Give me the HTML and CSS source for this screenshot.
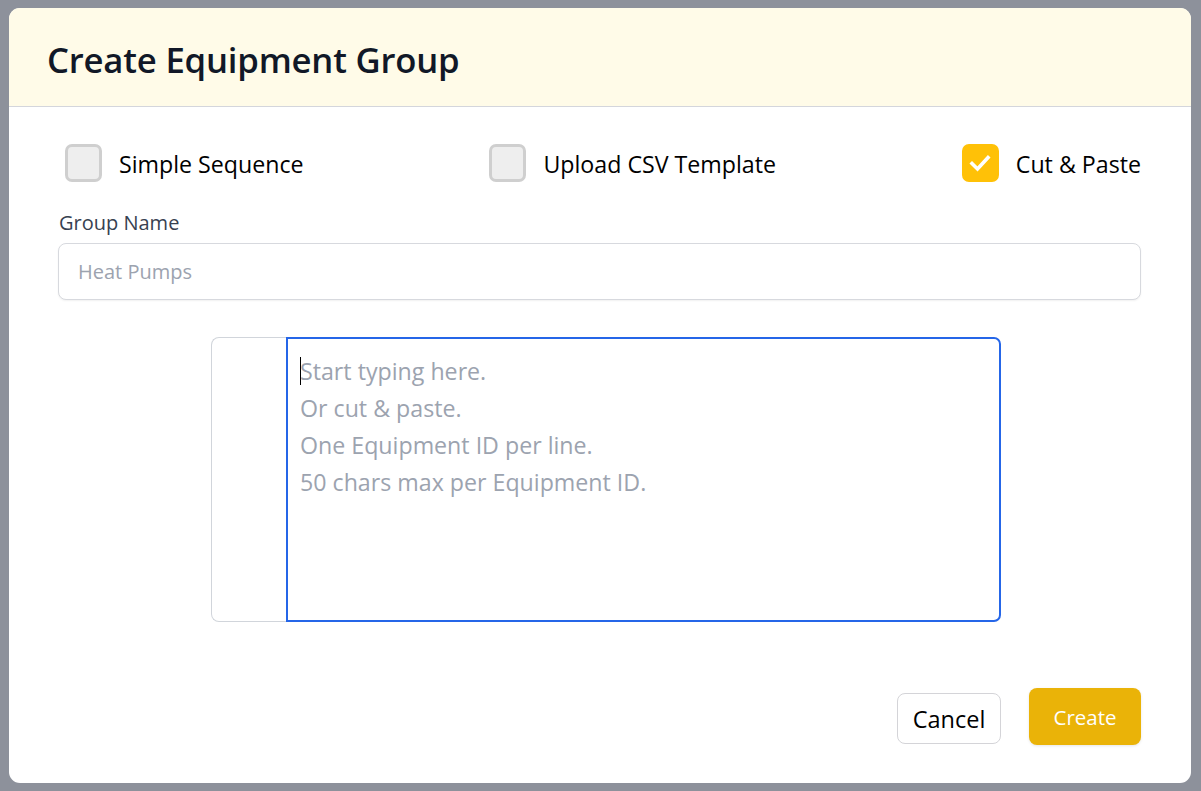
FILE: index.html
```html
<!DOCTYPE html>
<html lang="en">
<head>
<meta charset="utf-8">
<title>Create Equipment Group</title>
<link rel="stylesheet" href="styles.css">
</head>
<body>
<div class="overlay">
  <div class="modal">
    <div class="modal-header">
      <h1 class="modal-title">Create Equipment Group</h1>
    </div>
    <div class="modal-body">
      <div class="mode-row">
        <label class="mode">
          <span class="box"></span>
          <span class="mode-label">Simple Sequence</span>
        </label>
        <label class="mode">
          <span class="box"></span>
          <span class="mode-label">Upload CSV Template</span>
        </label>
        <label class="mode">
          <span class="box checked">
            <svg viewBox="0 0 38 38" width="38" height="38"><path d="M11 19.5 L16.5 25 L27 13.5" fill="none" stroke="#fff" stroke-width="3.6" stroke-linecap="square" stroke-linejoin="miter"/></svg>
          </span>
          <span class="mode-label">Cut &amp; Paste</span>
        </label>
      </div>
      <div class="field">
        <div class="field-label">Group Name</div>
        <input class="text-input" type="text" placeholder="Heat Pumps">
      </div>
      <div class="editor">
        <div class="gutter"></div>
        <div class="editor-main">
          <textarea class="editor-text" placeholder="Start typing here.&#10;Or cut &amp; paste.&#10;One Equipment ID per line.&#10;50 chars max per Equipment ID."></textarea>
          <span class="caret"></span>
        </div>
      </div>
      <div class="actions">
        <button class="btn btn-cancel" type="button">Cancel</button>
        <button class="btn btn-create" type="button">Create</button>
      </div>
    </div>
  </div>
</div>
</body>
</html>
```

FILE: styles.css
```css
* { box-sizing: border-box; }
html, body { margin: 0; padding: 0; }
body {
  font-family: "Open Sans", "Noto Sans", "Liberation Sans", sans-serif;
  width: 1201px;
  height: 791px;
  overflow: hidden;
}
.overlay {
  width: 1201px;
  height: 791px;
  background: #8d919b;
  padding: 8px 10px 8px 9px;
}
.modal {
  width: 1182px;
  height: 775px;
  background: #ffffff;
  border-radius: 11px;
  overflow: hidden;
  display: flex;
  flex-direction: column;
}
.modal-header {
  height: 99px;
  background: #fffbe8;
  border-bottom: 1px solid #d4d6dc;
  display: flex;
  align-items: center;
  padding: 4px 0 0 38px;
  flex-shrink: 0;
}
.modal-title {
  margin: 0;
  font-size: 34.7px;
  font-weight: 600;
  color: #111827;
  letter-spacing: -0.2px;
}
.modal-body {
  padding: 37px 50px 0 49px;
  display: flex;
  flex-direction: column;
  flex: 1;
}
.mode-row {
  display: flex;
  justify-content: space-between;
  align-items: center;
  padding: 0 0 0 7px;
  height: 38px;
}
.mode {
  display: flex;
  align-items: center;
  gap: 17px;
}
.box {
  width: 37px;
  height: 38px;
  border: 3px solid #cfcfcf;
  background: #eeeeee;
  border-radius: 7px;
  display: flex;
  align-items: center;
  justify-content: center;
}
.box.checked {
  background: #ffc107;
  border-color: #ffc107;
}
.box.checked svg { flex-shrink: 0; }
.mode-label {
  font-size: 23.2px;
  color: #000000;
  line-height: 32px;
  padding-top: 1px;
}
.field {
  margin-top: 27px;
}
.field-label {
  font-size: 20px;
  color: #374151;
  line-height: 27px;
  margin-left: 1px;
}
.text-input {
  display: block;
  margin-top: 7px;
  width: 100%;
  height: 57px;
  border: 1px solid #d7d9de;
  border-radius: 8px;
  padding: 0 19px;
  font-family: inherit;
  font-size: 20px;
  color: #111827;
  box-shadow: 0 1px 2px rgba(0,0,0,0.06);
  outline: none;
}
.text-input::placeholder { color: #9ca3af; }
.editor {
  margin: 37px 0 0 153px;
  width: 790px;
  height: 285px;
  display: flex;
}
.gutter {
  width: 75px;
  border: 1px solid #d1d5db;
  border-right: none;
  border-radius: 8px 0 0 8px;
  background: #ffffff;
}
.editor-main {
  flex: 1;
  position: relative;
}
.editor-text {
  display: block;
  width: 100%;
  height: 100%;
  border: 2px solid #2566e8;
  border-radius: 0 7px 7px 0;
  padding: 14px 12px;
  font-family: inherit;
  font-size: 23.2px;
  line-height: 37px;
  resize: none;
  outline: none;
  color: #111827;
}
.editor-text::placeholder { color: #9ca3af; }
.caret {
  position: absolute;
  left: 14px;
  top: 20px;
  width: 1px;
  height: 28px;
  background: #000;
}
.actions {
  margin-top: 66px;
  display: flex;
  justify-content: flex-end;
  align-items: flex-start;
  gap: 28px;
}
.btn {
  font-family: inherit;
  border-radius: 8px;
  cursor: pointer;
  padding: 0;
}
.btn-cancel {
  width: 104px;
  height: 51px;
  margin-top: 5px;
  background: #ffffff;
  border: 1px solid #d4d4d8;
  color: #000;
  font-size: 23.5px;
}
.btn-create {
  width: 112px;
  height: 57px;
  background: #eab308;
  border: none;
  color: #ffffff;
  font-size: 20.5px;
  box-shadow: 0 1px 3px rgba(0,0,0,0.1);
}
```
